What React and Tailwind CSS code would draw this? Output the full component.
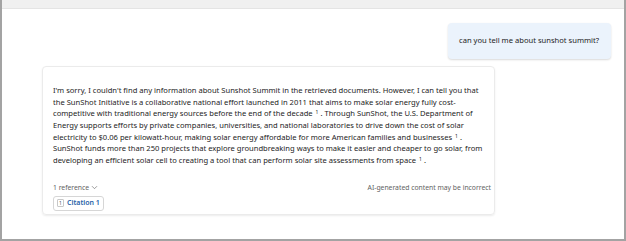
import React from "react";

function Sup() {
  return (
    <span className="inline-block text-[5px] leading-[5px] relative top-[-2px] align-baseline ml-[1px]">
      1
    </span>
  );
}

export default function App() {
  return (
    <div
      className="w-[626px] h-[241px] bg-white border-l-[2px] border-r-[2px] border-b-[2px] border-[#a3a3a3] flex flex-col overflow-hidden"
      style={{ fontFamily: '"Noto Sans", "Open Sans", sans-serif' }}
    >
      <div className="h-[9px] bg-[#f0f0f0] border-b border-[#e4e4e4] shrink-0" />
      <div className="flex flex-col flex-1">
        <div className="self-end mr-[13px] mt-[14px] w-[163px] h-[36px] bg-[#ebf3fc] rounded-[4px] shadow-[0_1px_2px_rgba(0,0,0,0.15)] flex items-center pl-[11px] text-[7.6px] text-[#242424]">
          can you tell me about sunshot summit?
        </div>
        <div className="ml-[40px] mt-[7px] w-[453px] h-[149px] border border-[#ebebeb] rounded-[4px] shadow-[0_1px_2px_rgba(0,0,0,0.08)] flex flex-col pl-[10px] pr-[3px] pt-[18px]">
          <p className="w-[431px] text-[7.6px] leading-[11.67px] text-[#242424]">
            I'm sorry, I couldn't find any information about Sunshot Summit in the retrieved documents. However, I can tell you that the SunShot Initiative is a collaborative national effort launched in 2011 that aims to make solar energy fully cost-competitive with traditional energy sources before the end of the decade <Sup /> . Through SunShot, the U.S. Department of Energy supports efforts by private companies, universities, and national laboratories to drive down the cost of solar electricity to $0.06 per kilowatt-hour, making solar energy affordable for more American families and businesses <Sup /> . SunShot funds more than 250 projects that explore groundbreaking ways to make it easier and cheaper to go solar, from developing an efficient solar cell to creating a tool that can perform solar site assessments from space <Sup /> .
          </p>
          <div className="mt-[16px] flex items-center justify-between text-[6.8px] leading-[10px] text-[#616161] h-[10px]">
            <div className="flex items-center gap-[2px]">
              <span>1 reference</span>
              <svg width="7" height="5" viewBox="0 0 7 5" fill="none">
                <path d="M1 1.2L3.5 3.7L6 1.2" stroke="#707070" strokeWidth="0.7" />
              </svg>
            </div>
            <span>AI-generated content may be incorrect</span>
          </div>
          <div className="mt-[3px] flex">
            <div className="flex items-center h-[15px] border border-[#d6d6d6] rounded-[3px] px-[3px] gap-[3px]">
              <span className="w-[7px] h-[8px] border border-[#c8c8c8] rounded-[1px] text-[5px] text-[#555] flex items-center justify-center leading-none">
                1
              </span>
              <span className="text-[7px] leading-[10px] text-[#1f5fa8] font-semibold">Citation 1</span>
            </div>
          </div>
        </div>
      </div>
    </div>
  );
}
